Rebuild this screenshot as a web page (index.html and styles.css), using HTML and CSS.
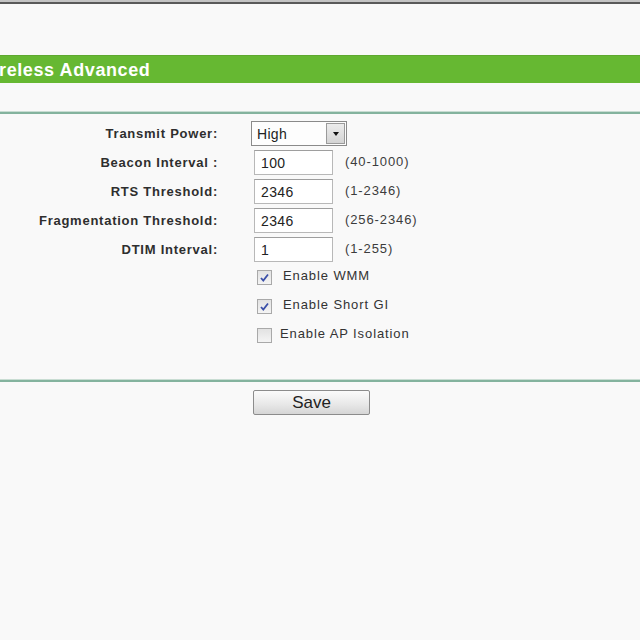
FILE: index.html
```html
<!DOCTYPE html>
<html>
<head>
<meta charset="utf-8">
<link rel="stylesheet" href="styles.css">
</head>
<body>
<div class="topbar"></div>
<div class="page">
  <div class="title-bar"><span class="title">Wireless Advanced</span></div>
  <div class="rule rule-top"></div>
  <div class="form">
    <div class="label">Transmit Power:</div>
    <div class="ctrl">
      <div class="select"><span class="select-val">High</span><span class="select-btn"><span class="tri"></span></span></div>
    </div>

    <div class="label">Beacon Interval :</div>
    <div class="ctrl"><div class="input">100</div><span class="range">(40-1000)</span></div>

    <div class="label">RTS Threshold:</div>
    <div class="ctrl"><div class="input">2346</div><span class="range">(1-2346)</span></div>

    <div class="label">Fragmentation Threshold:</div>
    <div class="ctrl"><div class="input">2346</div><span class="range">(256-2346)</span></div>

    <div class="label">DTIM Interval:</div>
    <div class="ctrl"><div class="input">1</div><span class="range">(1-255)</span></div>
  </div>
  <div class="checks">
    <div class="check-row">
      <span class="cb checked"><svg viewBox="0 0 15 15" width="15" height="15"><path d="M4 8 L6.3 10.6 L11 4.5" fill="none" stroke="#3a4fa8" stroke-width="1.8"/></svg></span>
      <span class="cb-label">Enable WMM</span>
    </div>
    <div class="check-row">
      <span class="cb checked"><svg viewBox="0 0 15 15" width="15" height="15"><path d="M4 8 L6.3 10.6 L11 4.5" fill="none" stroke="#3a4fa8" stroke-width="1.8"/></svg></span>
      <span class="cb-label">Enable Short GI</span>
    </div>
    <div class="check-row">
      <span class="cb"></span>
      <span class="cb-label cb-label-tight">Enable AP Isolation</span>
    </div>
  </div>
  <div class="rule rule-bottom"></div>
  <div class="actions"><button class="save">Save</button></div>
</div>
</body>
</html>
```

FILE: styles.css
```css
html, body {
  margin: 0;
  padding: 0;
  background: #f9f9f9;
  font-family: "Liberation Sans", Arial, sans-serif;
}
.topbar {
  height: 2px;
  background: #c4c4c4;
  border-bottom: 2px solid #5a5a5a;
}
.page {
  width: 640px;
  overflow: hidden;
}
.title-bar {
  margin-top: 51px;
  height: 27px;
  background: #66b832;
  border-top: 1px solid #5ea82f;
  display: flex;
  align-items: center;
}
.title {
  margin-left: -24px;
  color: #ffffff;
  font-weight: bold;
  font-size: 18px;
  letter-spacing: 0.6px;
  padding-top: 2px;
}
.rule {
  height: 2px;
  background: #84b39e;
  border-top: 1px solid #c9ddd3;
}
.rule-top {
  margin-top: 28px;
}
.form {
  margin-top: 5px;
  display: grid;
  grid-template-columns: 218px 1fr;
  grid-auto-rows: 29px;
  column-gap: 33px;
}
.label {
  text-align: right;
  font-weight: bold;
  font-size: 13px;
  letter-spacing: 0.75px;
  color: #2e2e2e;
  display: flex;
  align-items: center;
  justify-content: flex-end;
}
.ctrl {
  display: flex;
  align-items: center;
}
.select {
  width: 94px;
  height: 23px;
  border: 1px solid #8a8a8a;
  background: #fdfdfd;
  display: flex;
  align-items: center;
  box-sizing: content-box;
}
.select-val {
  flex: 1;
  padding-left: 5px;
  font-size: 14px;
  color: #222;
  letter-spacing: 0.3px;
}
.select-btn {
  width: 17px;
  height: 19px;
  margin-right: 1px;
  border: 1px solid #9a9a9a;
  background: linear-gradient(#ececec, #d4d4d4);
  display: flex;
  align-items: center;
  justify-content: center;
}
.tri {
  width: 0;
  height: 0;
  border-left: 3.5px solid transparent;
  border-right: 3.5px solid transparent;
  border-top: 4px solid #111;
}
.input {
  margin-left: 3px;
  width: 71px;
  height: 23px;
  border: 1px solid #b8b8b8;
  border-top-color: #9e9e9e;
  background: #ffffff;
  padding-left: 6px;
  font-size: 14px;
  line-height: 24px;
  color: #222;
  letter-spacing: 0.4px;
}
.range {
  margin-left: 12px;
  font-size: 13px;
  letter-spacing: 0.9px;
  color: #3c3c3c;
  margin-top: -2px;
}
.checks {
  margin-top: -1px;
  padding-left: 257px;
  display: flex;
  flex-direction: column;
}
.check-row {
  height: 29px;
  display: flex;
  align-items: center;
}
.cb {
  width: 13px;
  height: 13px;
  border: 1px solid #a9a9a9;
  background: linear-gradient(#e2e2e2, #f4f4f4);
  display: inline-block;
  position: relative;
}
.cb svg {
  position: absolute;
  left: -1px;
  top: -1px;
}
.cb-label {
  margin-left: 11px;
  margin-top: -4px;
  font-size: 13px;
  letter-spacing: 0.9px;
  color: #333;
}
.cb-label-tight {
  margin-left: 8px;
}
.rule-bottom {
  margin-top: 29px;
}
.actions {
  padding-left: 253px;
  margin-top: 8px;
}
.save {
  width: 117px;
  height: 25px;
  border: 1px solid #8c8c8c;
  border-radius: 2px;
  background: linear-gradient(#fbfbfb, #e9e9e9 55%, #d6d6d6);
  font-family: "Liberation Sans", Arial, sans-serif;
  font-size: 17px;
  color: #222;
  padding: 0;
  line-height: 23px;
}
```
